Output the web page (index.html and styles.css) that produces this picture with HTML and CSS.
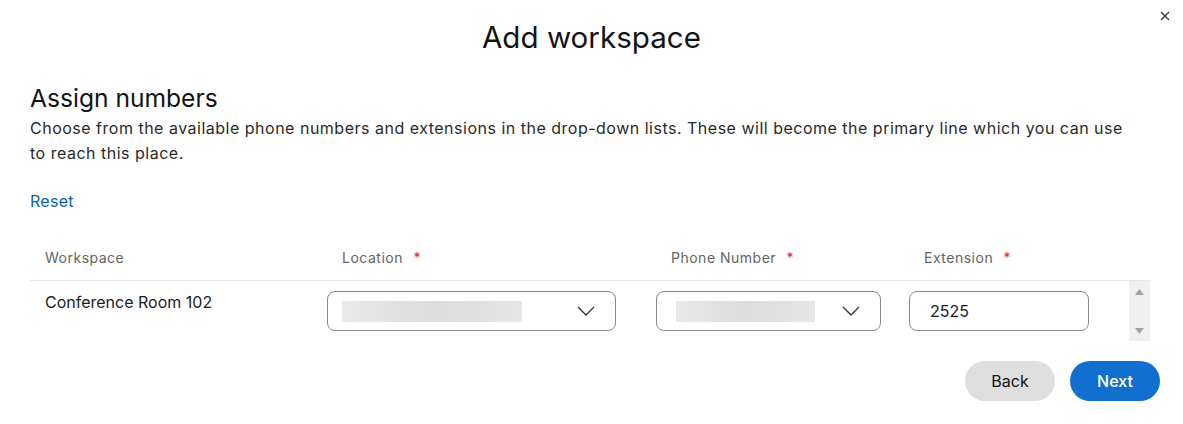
FILE: index.html
```html
<!DOCTYPE html>
<html>
<head>
<meta charset="utf-8">
<link rel="stylesheet" href="styles.css">
</head>
<body>
<div class="modal">
  <button class="close" aria-label="Close">
    <svg width="10" height="10" viewBox="0 0 10 10"><path d="M1 1L9 9M9 1L1 9" stroke="#333" stroke-width="1.3" fill="none"/></svg>
  </button>
  <h1 class="title">Add workspace</h1>
  <section class="body">
    <h2 class="heading">Assign numbers</h2>
    <p class="desc">Choose from the available phone numbers and extensions in the drop-down lists. These will become the primary line which you can use to reach this place.</p>
    <a class="reset" href="#">Reset</a>
    <div class="table">
      <div class="thead">
        <div class="col c-ws">Workspace</div>
        <div class="col c-loc">Location <span class="req">*</span></div>
        <div class="col c-ph">Phone Number <span class="req">*</span></div>
        <div class="col c-ext">Extension <span class="req">*</span></div>
      </div>
      <div class="tbody">
        <div class="row">
          <div class="col c-ws cell-text">Conference Room 102</div>
          <div class="col c-loc">
            <div class="select sel-loc"><span class="ph ph-loc"></span><svg class="chev" width="18" height="10" viewBox="0 0 18 10"><path d="M1 1L9 9L17 1" stroke="#333" stroke-width="1.3" fill="none"/></svg></div>
          </div>
          <div class="col c-ph">
            <div class="select sel-ph"><span class="ph ph-ph"></span><svg class="chev" width="18" height="10" viewBox="0 0 18 10"><path d="M1 1L9 9L17 1" stroke="#333" stroke-width="1.3" fill="none"/></svg></div>
          </div>
          <div class="col c-ext">
            <div class="input">2525</div>
          </div>
        </div>
        <div class="scrollbar">
          <svg width="9" height="6" viewBox="0 0 9 6"><path d="M0 6L4.5 0L9 6Z" fill="#a3a3a3"/></svg>
          <svg width="9" height="6" viewBox="0 0 9 6"><path d="M0 0L4.5 6L9 0Z" fill="#a3a3a3"/></svg>
        </div>
      </div>
    </div>
    <div class="actions">
      <button class="btn btn-back">Back</button>
      <button class="btn btn-next">Next</button>
    </div>
  </section>
</div>
</body>
</html>
```
FILE: styles.css
```css
* { box-sizing: border-box; }
html, body { margin: 0; background: #fff; }
body { font-family: Inter, "Noto Sans", sans-serif; color: #121212; }
.modal { position: relative; width: 1183px; height: 424px; padding-top: 17px; }
.close { position: absolute; top: 11px; right: 13px; border: 0; background: none; padding: 0; width: 10px; height: 10px; display: flex; }
.title { margin: 0; text-align: center; font-weight: 400; font-size: 29.6px; line-height: 40px; color: #121212; }
.body { padding: 0 23px 0 30px; }
.heading { margin: 24px 0 0; font-weight: 400; font-size: 24.6px; line-height: 34px; color: #121212; }
.desc { margin: 1px 0 0; max-width: 1100px; font-size: 16px; line-height: 25px; color: #2a2a2a; letter-spacing: 0.5px; }
.reset { display: inline-block; margin-top: 23px; font-size: 16px; line-height: 24px; color: #0a5fb4; text-decoration: none; letter-spacing: 0.3px; }
.table { margin-top: 22px; width: 1120px; }
.thead { display: flex; height: 46px; align-items: center; border-bottom: 1px solid #e6e6e6; font-size: 14px; color: #646464; letter-spacing: 0.5px; }
.req { color: #d6243b; margin-left: 6px; }
.col { flex: none; }
.c-ws { width: 297px; padding-left: 15px; }
.c-loc { width: 329px; }
.c-ph { width: 253px; }
.c-ext { width: 220px; }
.thead .c-loc { padding-left: 15px; }
.thead .c-ph { padding-left: 15px; }
.thead .c-ext { padding-left: 15px; }
.tbody { display: flex; height: 60px; }
.row { display: flex; flex: 1; padding-top: 10px; }
.cell-text { font-size: 16px; line-height: 20px; padding-top: 1px; color: #1c1c1c; }
.select { height: 40px; border: 1px solid #8a8a8a; border-radius: 8px; display: flex; align-items: center; padding-left: 14px; position: relative; }
.sel-loc { width: 289px; }
.sel-ph { width: 225px; }
.ph { height: 21px; background: linear-gradient(90deg, #e9e9e9 0%, #dcdcdc 50%, #e6e6e6 100%); }
.ph-loc { width: 180px; }
.ph-ph { width: 139px; margin-left: 5px; }
.chev { margin-left: auto; margin-right: 20px; }
.input { width: 180px; height: 40px; border: 1px solid #8a8a8a; border-radius: 8px; padding-left: 20px; display: flex; align-items: center; font-size: 16px; color: #1c1c1c; }
.scrollbar { width: 21px; background: #f0f0f0; display: flex; flex-direction: column; justify-content: space-between; align-items: center; padding: 8px 0 7px; }
.actions { display: flex; justify-content: flex-end; gap: 15px; margin-top: 20px; }
.btn { width: 90px; height: 40px; border-radius: 20px; border: 0; font-family: Inter, "Noto Sans", sans-serif; font-size: 16px; }
.btn-back { background: #dedede; color: #121212; }
.btn-next { background: #1170cf; color: #fff; font-weight: 500; }
```
